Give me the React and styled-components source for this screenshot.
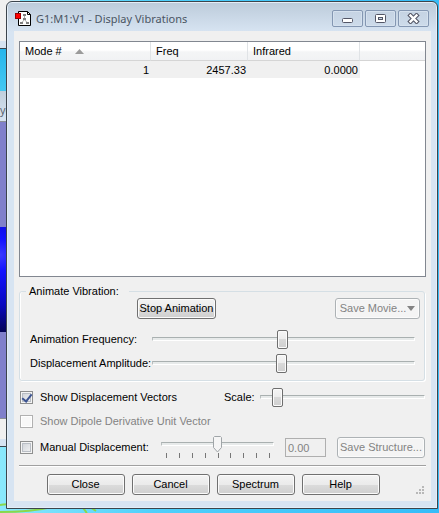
import React, { useState } from "react";
import styled, { createGlobalStyle, css } from "styled-components";

const GlobalStyle = createGlobalStyle`
* {
  box-sizing: border-box;
}
body {
  margin: 0;
  font-family: "Liberation Sans", Arial, sans-serif;
  font-size: 11px;
  line-height: 13px;
  color: #000;
}
button, input {
  font: inherit;
  color: inherit;
}
`;

const Desktop = styled.div`
  position: relative;
  min-height: 100vh;
  padding: 1px 1px 4px 6px;
  background: linear-gradient(90deg, #8ae8fc, #4fd0fb 35%, #36bcf8);
  overflow: hidden;
`;

/* the application window that is showing behind the dialog */
const BackWindow = styled.div`
  position: absolute;
  top: 0;
  left: 0;
  width: 20px;
  display: flex;
  flex-direction: column;
`;

const Strip = styled.div`
  height: ${(props) => props.$height}px;
  background: ${(props) => props.$fill};
  border-bottom: ${(props) => (props.$line ? `1px solid ${props.$line}` : "0")};
`;

const BackTitle = styled(Strip)`
  padding-top: 12px;
  font-family: "Open Sans", sans-serif;
  font-size: 11px;
  color: #55606c;
`;

const Swirl = styled.svg`
  position: absolute;
  left: 0;
  bottom: 0;
`;

const Window = styled.section`
  position: relative;
  padding: 0 6px 7px 7px;
  border: 1px solid #3c444c;
  border-radius: 6px 6px 0 0;
  box-shadow: inset 0 0 0 1px #e4eef8;
  background: linear-gradient(#bccbda, #d7e4f2 30px);
`;

const TitleBar = styled.header`
  display: flex;
  align-items: center;
  height: 29px;
  padding: 4px 2px 0 1px;
`;

const Title = styled.h1`
  flex: 1;
  margin: 0 0 0 4px;
  font-family: "Noto Sans", "Open Sans", sans-serif;
  font-size: 11px;
  font-weight: 400;
  line-height: 16px;
  color: #4a5563;
  white-space: nowrap;
`;

const Captions = styled.div`
  display: flex;
  gap: 2px;
`;

const CaptionButton = styled.button`
  display: flex;
  align-items: center;
  justify-content: center;
  width: 31px;
  height: 17px;
  padding: 0;
  border: 1px solid #8497b2;
  border-radius: 2px;
  background: linear-gradient(#c5d3e3, #cddbea);
  box-shadow: inset 0 0 0 1px #d5e1ee;
`;

const Client = styled.main`
  padding: 10px 5px 6px;
  background: #f0f0f0;
`;

const ListBox = styled.div`
  height: 236px;
  border: 1px solid #828790;
  background: #fff;
`;

const Table = styled.table`
  width: 100%;
  table-layout: fixed;
  border-collapse: separate;
  border-spacing: 0;

  th {
    height: 19px;
    padding: 1px 5px 0;
    border-right: 1px solid #e0e3e6;
    border-bottom: 1px solid #d5d5d5;
    background: linear-gradient(#fff 45%, #f4f5f6 55%, #f1f2f4);
    font-weight: 400;
    text-align: left;
  }
  th:last-child {
    border-right: 0;
  }
  td {
    height: 17px;
    padding: 1px 2px 0;
    background: #f0f0f0;
    text-align: right;
  }
  td:last-child {
    background: #fff;
  }
`;

const Column = styled.col`
  width: ${(props) => (props.$width ? `${props.$width}px` : "auto")};
`;

const SortArrow = styled.svg`
  margin-left: 13px;
  vertical-align: 1px;
`;

const Group = styled.fieldset`
  min-width: 0;
  margin: 8px 1px 0 0;
  padding: 0 4px 5px 10px;
  border: 1px solid #d5dfe5;
  border-radius: 3px;
  box-shadow: inset 1px 0 0 #fff, 1px 1px 0 #fff;

  legend {
    margin-left: -4px;
    padding: 0 10px 0 3px;
  }
`;

const ButtonRow = styled.div`
  display: flex;
  justify-content: space-between;
  padding-left: 107px;
  margin-bottom: 8px;
`;

const Button = styled.button`
  display: inline-flex;
  align-items: center;
  justify-content: center;
  gap: 1px;
  width: ${(props) => props.$width || 78}px;
  height: 21px;
  padding: 0;
  border: 1px solid #707070;
  border-radius: 3px;
  background: linear-gradient(#f3f3f3, #ebebeb 50%, #dcdcdc 50%, #cfcfcf);
  box-shadow: inset 0 0 0 1px #fbfbfb;
  white-space: nowrap;

  &:disabled {
    border-color: #adb2b5;
    background: #f4f4f4;
    color: #838383;
  }
`;

const Row = styled.div`
  display: flex;
  align-items: center;
  height: ${(props) => props.$height || 24}px;
`;

const Label = styled.label`
  flex: none;
  width: ${(props) => (props.$width ? `${props.$width}px` : "auto")};
  white-space: nowrap;
  color: ${(props) => (props.$dim ? "#838383" : "#000")};
`;

const thumb = css`
  appearance: none;
  width: 11px;
  height: 19px;
  margin-top: -8px;
  border: 1px solid #6e6e6e;
  border-radius: 2px;
  background: linear-gradient(#f5f5f5, #ececec 50%, #d9d9d9 50%, #cfcfcf);
  box-shadow: inset 0 0 0 1px #fbfbfb;
`;

const pointer =
  "data:image/svg+xml,%3Csvg xmlns='http://www.w3.org/2000/svg' width='9' height='17'%3E%3Cpath d='M1.5.5h6l1 1v10l-4 4.500-4-4.500v-10z' fill='%23f5f5f5' stroke='%23a0a5a8'/%3E%3C/svg%3E";

const Slider = styled.input.attrs({ type: "range" })`
  appearance: none;
  flex: 1;
  min-width: 0;
  height: 19px;
  margin: 0;
  margin-right: ${(props) => props.$end || 0}px;
  background: transparent;

  &::-webkit-slider-runnable-track {
    height: 4px;
    border-top: 1px solid #a9b0b0;
    border-left: 1px solid #b8bebe;
    border-right: 1px solid #fff;
    border-bottom: 1px solid #fff;
    background: #e7eaea;
  }
  &::-webkit-slider-thumb {
    ${thumb}
  }
  &:disabled::-webkit-slider-thumb {
    width: 9px;
    height: 17px;
    margin-top: -7px;
    border: 0;
    border-radius: 0;
    box-shadow: none;
    background: url("${pointer}");
  }
`;

const TickSlider = styled.div`
  display: flex;
  flex-direction: column;
  flex: 1;
  height: 26px;
  margin-right: 11px;

  input {
    flex: none;
    width: 100%;
  }
`;

const Ticks = styled.div`
  display: flex;
  justify-content: space-between;
  padding: 0 4px 0 5px;

  i {
    width: 1px;
    height: 5px;
    background: #777;
  }
`;

const CheckBox = styled.input.attrs({ type: "checkbox" })`
  appearance: none;
  flex: none;
  display: grid;
  place-items: center;
  width: 13px;
  height: 13px;
  margin: 0 7px 0 1px;
  border: 1px solid #8e8f8f;
  background: linear-gradient(135deg, #cbcfd5, #f6f6f6);
  box-shadow: inset 0 0 0 1px #f4f4f4, inset 0 0 0 2px #b9bec5;

  &:checked::after {
    content: "";
    width: 4px;
    height: 8px;
    margin-bottom: 2px;
    border: solid #3d5491;
    border-width: 0 2px 2px 0;
    transform: rotate(38deg);
  }
  &:disabled {
    border-color: #b1b1b1;
    background: #f8f8f8;
    box-shadow: inset 0 0 0 1px #fff;
  }
`;

const Options = styled.div`
  padding: 4px 1px 0 0;
`;

const NumberBox = styled.input`
  flex: none;
  width: 41px;
  height: 19px;
  margin-right: 11px;
  padding: 1px 2px 0;
  border: 1px solid #afafaf;
  border-radius: 0;
  background: #f0f0f0;
  color: #838383;
`;

const Footer = styled.footer`
  position: relative;
  display: flex;
  justify-content: center;
  gap: 7px;
  margin-top: 4px;
  padding: 8px 19px 0 0;
  border-top: 1px solid #a0a0a0;
  box-shadow: inset 0 1px 0 #fff;
`;

const Grip = styled.svg`
  position: absolute;
  right: 2px;
  bottom: 1px;
`;

function MoleculeIcon() {
  return (
    <svg width="17" height="17" viewBox="0 0 17 17" aria-hidden="true">
      <path d="M3.500 1.500h9l3 3v11h-12z" fill="#fff" stroke="#000" />
      <path d="M12.500 1.500v3h3" fill="none" stroke="#000" />
      <path d="M9.500 5v4.500L6.500 13M9.500 9.500l3 3.500" fill="none" stroke="#aaa" />
      <path d="M8 4h3v2H8zM8 8h3v2H8zM5 12h3v2H5zM11 12h3v2h-3z" fill="#808080" />
      <rect x="0.500" y="3.500" width="5" height="5" fill="#f00" stroke="#900" />
    </svg>
  );
}

function Range({ id, start, ...rest }) {
  const [value, setValue] = useState(start);
  return (
    <Slider
      id={id}
      step="any"
      value={value}
      onChange={(e) => setValue(e.target.value)}
      {...rest}
    />
  );
}

export default function App() {
  const [vectors, setVectors] = useState(true);
  const [manual, setManual] = useState(false);

  return (
    <Desktop>
      <GlobalStyle />
      <BackWindow aria-hidden="true">
        <Strip $height={41} $fill="#f0f0f0" />
        <Strip $height={8} $fill="#d7e4f2" $line="#3c444c" />
        <Strip $height={42} $fill="linear-gradient(#27b5ec, #43c8f2)" />
        <BackTitle $height={31} $fill="linear-gradient(#c0cfdd, #d7e4f2)" $line="#8a8f96">
          yo
        </BackTitle>
        <Strip $height={105} $fill="#8080cb" />
        <Strip
          $height={105}
          $fill="radial-gradient(circle at 0 28px, #3a3aff, #1414ff 16px, #0808c0 50px, #03034a 80px)"
        />
        <Strip $height={87} $fill="#8080cb" $line="#8a8f96" />
        <Strip $height={20} $fill="#f0f0f0" />
        <Strip $height={8} $fill="#d7e4f2" $line="#3c444c" />
      </BackWindow>
      <Swirl width="110" height="10" aria-hidden="true">
        <path d="M0 2C10 1 22 1 30-2" fill="none" stroke="#8ad84a" strokeWidth="2" />
        <path d="M0 9C20 9 40 7 52 4M82 4c3 3 4 4 5 7M90 4l6 4" fill="none" stroke="#8ad84a" strokeWidth="2" />
      </Swirl>

      <Window aria-label="Display Vibrations">
        <TitleBar>
          <MoleculeIcon />
          <Title>G1:M1:V1 - Display Vibrations</Title>
          <Captions>
            <CaptionButton aria-label="Minimize">
              <svg width="13" height="11">
                <rect x="1.500" y="5.500" width="10" height="4" rx="1" fill="#fff" stroke="#535666" />
              </svg>
            </CaptionButton>
            <CaptionButton aria-label="Maximize">
              <svg width="11" height="9">
                <rect x="0.500" y="0.500" width="10" height="8" rx="1" fill="#fff" stroke="#535666" />
                <rect x="3.500" y="3.500" width="4" height="2" fill="#c9d7e6" stroke="#535666" />
              </svg>
            </CaptionButton>
            <CaptionButton aria-label="Close window">
              <svg width="13" height="11">
                <path d="M3.500 2.500l6 6M9.500 2.500l-6 6" stroke="#535666" strokeWidth="4.500" strokeLinecap="square" />
                <path d="M3.500 2.500l6 6M9.500 2.500l-6 6" stroke="#fff" strokeWidth="2.400" strokeLinecap="square" />
              </svg>
            </CaptionButton>
          </Captions>
        </TitleBar>

        <Client>
          <ListBox>
            <Table>
              <colgroup>
                <Column $width={131} />
                <Column $width={97} />
                <Column $width={112} />
                <Column />
              </colgroup>
              <thead>
                <tr>
                  <th scope="col">
                    Mode #
                    <SortArrow width="9" height="5" aria-hidden="true">
                      <path d="M0 5L4.500 0 9 5z" fill="#9b9b9b" />
                    </SortArrow>
                  </th>
                  <th scope="col">Freq</th>
                  <th scope="col">Infrared</th>
                  <th aria-hidden="true" />
                </tr>
              </thead>
              <tbody>
                <tr>
                  <td>1</td>
                  <td>2457.33</td>
                  <td>0.0000</td>
                  <td />
                </tr>
              </tbody>
            </Table>
          </ListBox>

          <Group>
            <legend>Animate Vibration:</legend>
            <ButtonRow>
              <Button $width={79}>Stop Animation</Button>
              <Button $width={85} disabled>
                Save Movie...
                <svg width="8" height="5" aria-hidden="true">
                  <path d="M0 0h8L4 5z" fill="#838383" />
                </svg>
              </Button>
            </ButtonRow>
            <Row>
              <Label htmlFor="frequency" $width={122}>Animation Frequency:</Label>
              <Range id="frequency" start={49.6} $end={5} />
            </Row>
            <Row>
              <Label htmlFor="amplitude" $width={122}>Displacement Amplitude:</Label>
              <Range id="amplitude" start={49.2} $end={5} />
            </Row>
          </Group>

          <Options>
            <Row>
              <CheckBox id="vectors" checked={vectors} onChange={() => setVectors(!vectors)} />
              <Label htmlFor="vectors" $width={184}>Show Displacement Vectors</Label>
              <Label htmlFor="scale" $width={36}>Scale:</Label>
              <Range id="scale" start={7} />
            </Row>
            <Row>
              <CheckBox id="dipole" disabled />
              <Label htmlFor="dipole" $dim>Show Dipole Derivative Unit Vector</Label>
            </Row>
            <Row $height={28}>
              <CheckBox id="manual" checked={manual} onChange={() => setManual(!manual)} />
              <Label htmlFor="manual" $width={121}>Manual Displacement:</Label>
              <TickSlider>
                <Range id="displacement" start={50} aria-label="Displacement" disabled />
                <Ticks>
                  {Array.from({ length: 9 }, (_, i) => (
                    <i key={i} />
                  ))}
                </Ticks>
              </TickSlider>
              <NumberBox defaultValue="0.00" aria-label="Displacement value" disabled />
              <Button $width={88} disabled>Save Structure...</Button>
            </Row>
          </Options>

          <Footer>
            <Button>Close</Button>
            <Button>Cancel</Button>
            <Button>Spectrum</Button>
            <Button>Help</Button>
            <Grip width="8" height="8" aria-hidden="true">
              <path d="M6 0h2v2H6zM3 3h2v2H3zM6 3h2v2H6zM0 6h2v2H0zM3 6h2v2H3zM6 6h2v2H6z" fill="#b8b8b8" />
            </Grip>
          </Footer>
        </Client>
      </Window>
    </Desktop>
  );
}
